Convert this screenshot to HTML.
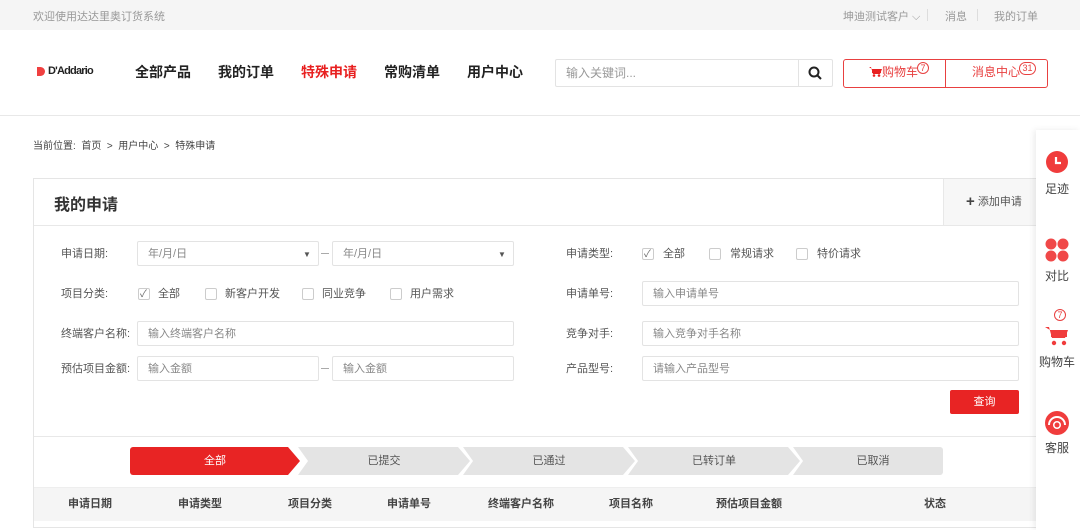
<!DOCTYPE html>
<html><head><meta charset="utf-8"><style>
*{margin:0;padding:0;box-sizing:border-box}
body{width:1080px;height:521px;overflow:hidden;background:#fff;font-family:"Liberation Sans","Noto Sans CJK SC",sans-serif;position:relative;color:#333}
.a{position:absolute;white-space:nowrap}
.top{left:0;top:0;width:1080px;height:30px;background:#f5f5f5;font-size:11px;color:#999}
.nav{font-size:14px;font-weight:bold;color:#222;top:62px}
.lbl{font-size:11px;color:#555}
.inp{border:1px solid #e3e3e3;border-radius:2px;height:25px;font-size:11px;color:#888;padding-left:10px;line-height:25px;background:#fff}
.cb{width:12px;height:12px;border:1px solid #ccc;border-radius:2px;background:#fff}
.ct{font-size:11px;color:#555}
.step{top:447px;height:28px;background:#e4e4e4;font-size:11px;color:#555;text-align:center;line-height:28px}
.th{top:495px;font-size:11px;font-weight:bold;color:#444}
</style></head><body>
<div class="a top"><span class="a" style="left:33px;top:8px">欢迎使用达达里奥订货系统</span>
<span class="a" style="left:843px;top:8px">坤迪测试客户 ⌵</span>
<span class="a" style="left:927px;top:9px;width:1px;height:12px;background:#ddd"></span>
<span class="a" style="left:945px;top:8px">消息</span>
<span class="a" style="left:977px;top:9px;width:1px;height:12px;background:#ddd"></span>
<span class="a" style="left:994px;top:8px">我的订单</span></div>
<div class="a" style="left:0;top:115px;width:1080px;height:1px;background:#e8e8e8"></div>
<div class="a" style="left:37px;top:67px;width:8px;height:9px;background:#f04040;border-radius:0 5px 5px 0"></div>
<div class="a" style="left:48px;top:65px;font-size:11px;font-weight:bold;letter-spacing:-0.8px;color:#222">D'Addario</div>
<div class="a nav" style="left:135px">全部产品</div>
<div class="a nav" style="left:218px">我的订单</div>
<div class="a nav" style="left:301px;color:#e82020">特殊申请</div>
<div class="a nav" style="left:384px">常购清单</div>
<div class="a nav" style="left:467px">用户中心</div>
<div class="a" style="left:555px;top:59px;width:278px;height:28px;border:1px solid #e3e3e3;border-radius:2px"></div>
<div class="a" style="left:566px;top:64px;font-size:12px;color:#999">输入关键词...</div>
<div class="a" style="left:798px;top:60px;width:1px;height:26px;background:#e3e3e3"></div>
<svg class="a" style="left:808px;top:66px" width="14" height="14"><circle cx="6" cy="6" r="4.5" fill="none" stroke="#222" stroke-width="2"/><path d="M9 9l4 4" stroke="#222" stroke-width="2"/></svg>
<div class="a" style="left:843px;top:59px;width:205px;height:29px;border:1px solid #e84040;border-radius:3px"></div>
<div class="a" style="left:945px;top:59px;width:1px;height:29px;background:#e84040"></div>
<svg class="a" style="left:869px;top:66px" width="13" height="11"><path d="M0 1h2l2 7h7l2-5H3" fill="#e82020"/><rect x="3" y="3" width="9" height="4" fill="#e82020"/><circle cx="5" cy="9.5" r="1.3" fill="#e82020"/><circle cx="10" cy="9.5" r="1.3" fill="#e82020"/></svg>
<div class="a" style="left:882px;top:63px;font-size:12px;color:#e84040">购物车</div>
<div class="a" style="left:917px;top:62px;width:12px;height:12px;border:1px solid #e84040;border-radius:50%;font-size:9px;color:#e84040;text-align:center;line-height:10px">7</div>
<div class="a" style="left:972px;top:63px;font-size:12px;color:#e84040">消息中心</div>
<div class="a" style="left:1019px;top:62px;width:17px;height:13px;border:1px solid #e84040;border-radius:7px;font-size:9px;color:#e84040;text-align:center;line-height:11px">31</div>
<div class="a" style="left:33px;top:137px;font-size:10px;color:#444">当前位置:&nbsp; 首页 &nbsp;&gt;&nbsp; 用户中心 &nbsp;&gt;&nbsp; 特殊申请</div>
<div class="a" style="left:33px;top:178px;width:1014px;height:350px;border:1px solid #e5e5e5"></div>
<div class="a" style="left:34px;top:225px;width:1012px;height:1px;background:#e8e8e8"></div>
<div class="a" style="left:943px;top:179px;width:103px;height:46px;background:#f7f7f7;border-left:1px solid #e8e8e8"></div>
<div class="a" style="left:966px;top:193px;font-size:11px;color:#555"><b style="font-size:15px;color:#444;vertical-align:-1px">+</b> 添加申请</div>
<div class="a" style="left:54px;top:191px;font-size:16px;font-weight:bold;color:#333">我的申请</div>
<div class="a lbl" style="left:61px;top:245px">申请日期:</div>
<div class="a inp" style="left:137px;top:241px;width:182px">年/月/日<span class="a" style="left:165px;top:0;font-size:8px;color:#555">▼</span></div>
<div class="a" style="left:321px;top:253px;width:8px;height:1px;background:#aaa"></div>
<div class="a inp" style="left:332px;top:241px;width:182px">年/月/日<span class="a" style="left:165px;top:0;font-size:8px;color:#555">▼</span></div>
<div class="a lbl" style="left:61px;top:285px">项目分类:</div>
<div class="a cb" style="left:138px;top:288px"></div><div class="a" style="left:140px;top:285px;font-size:10px;color:#666">✓</div><div class="a ct" style="left:158px;top:285px">全部</div>
<div class="a cb" style="left:205px;top:288px"></div><div class="a ct" style="left:225px;top:285px">新客户开发</div>
<div class="a cb" style="left:302px;top:288px"></div><div class="a ct" style="left:322px;top:285px">同业竞争</div>
<div class="a cb" style="left:390px;top:288px"></div><div class="a ct" style="left:410px;top:285px">用户需求</div>
<div class="a lbl" style="left:61px;top:325px">终端客户名称:</div>
<div class="a inp" style="left:137px;top:321px;width:377px">输入终端客户名称</div>
<div class="a lbl" style="left:61px;top:360px">预估项目金额:</div>
<div class="a inp" style="left:137px;top:356px;width:182px">输入金额</div>
<div class="a" style="left:321px;top:368px;width:8px;height:1px;background:#aaa"></div>
<div class="a inp" style="left:332px;top:356px;width:182px">输入金额</div>
<div class="a lbl" style="left:566px;top:245px">申请类型:</div>
<div class="a cb" style="left:642px;top:248px"></div><div class="a" style="left:644px;top:245px;font-size:10px;color:#666">✓</div><div class="a ct" style="left:663px;top:245px">全部</div>
<div class="a cb" style="left:709px;top:248px"></div><div class="a ct" style="left:730px;top:245px">常规请求</div>
<div class="a cb" style="left:796px;top:248px"></div><div class="a ct" style="left:817px;top:245px">特价请求</div>
<div class="a lbl" style="left:566px;top:285px">申请单号:</div>
<div class="a inp" style="left:642px;top:281px;width:377px">输入申请单号</div>
<div class="a lbl" style="left:566px;top:325px">竞争对手:</div>
<div class="a inp" style="left:642px;top:321px;width:377px">输入竞争对手名称</div>
<div class="a lbl" style="left:566px;top:360px">产品型号:</div>
<div class="a inp" style="left:642px;top:356px;width:377px">请输入产品型号</div>
<div class="a" style="left:950px;top:390px;width:69px;height:24px;background:#e82424;border-radius:2px;color:#fff;font-size:11px;text-align:center;line-height:24px">查询</div>
<div class="a" style="left:34px;top:436px;width:1012px;height:1px;background:#e8e8e8"></div>
<div class="a step" style="left:793px;width:150px;border-radius:0 3px 3px 0;clip-path:polygon(0 0,100% 0,100% 100%,0 100%,10px 50%);padding-left:10px">已取消</div>
<div class="a step" style="left:628px;width:172px;clip-path:polygon(0 0,160px 0,172px 50%,160px 100%,0 100%,10px 50%)">已转订单</div>
<div class="a step" style="left:463px;width:172px;clip-path:polygon(0 0,160px 0,172px 50%,160px 100%,0 100%,10px 50%)">已通过</div>
<div class="a step" style="left:298px;width:172px;clip-path:polygon(0 0,160px 0,172px 50%,160px 100%,0 100%,10px 50%)">已提交</div>
<div class="a step" style="left:130px;width:170px;background:#e82424;color:#fff;border-radius:3px 0 0 3px;clip-path:polygon(0 0,158px 0,170px 50%,158px 100%,0 100%);padding-right:0">全部</div>
<div class="a" style="left:34px;top:487px;width:1012px;height:34px;background:#f5f5f5;border-top:1px solid #eee"></div>
<div class="a th" style="left:68px">申请日期</div>
<div class="a th" style="left:178px">申请类型</div>
<div class="a th" style="left:288px">项目分类</div>
<div class="a th" style="left:387px">申请单号</div>
<div class="a th" style="left:488px">终端客户名称</div>
<div class="a th" style="left:609px">项目名称</div>
<div class="a th" style="left:716px">预估项目金额</div>
<div class="a th" style="left:924px">状态</div>
<div class="a" style="left:1036px;top:130px;width:44px;height:400px;background:#fff;box-shadow:-2px 0 6px rgba(0,0,0,0.08)"></div>
<svg class="a" style="left:1046px;top:151px" width="22" height="22"><circle cx="11" cy="11" r="11" fill="#f03c3c"/><path d="M10 6v6h5" stroke="#fff" stroke-width="2.2" fill="none"/></svg>
<div class="a" style="left:1045px;top:180px;font-size:12px;color:#444">足迹</div>
<svg class="a" style="left:1045px;top:238px" width="24" height="24"><circle cx="6" cy="6" r="5.5" fill="#f04848"/><circle cx="18" cy="6" r="5.5" fill="#f04848"/><circle cx="6" cy="18" r="5.5" fill="#f04848"/><circle cx="18" cy="18" r="5.5" fill="#f04848"/></svg>
<div class="a" style="left:1045px;top:267px;font-size:12px;color:#444">对比</div>
<div class="a" style="left:1054px;top:309px;width:12px;height:12px;border:1px solid #e84040;border-radius:50%;font-size:9px;color:#e84040;text-align:center;line-height:10px">7</div>
<svg class="a" style="left:1045px;top:325px" width="24" height="22"><path d="M0 2h4l3 11h13l3-8H5" fill="#f03c3c"/><rect x="6" y="5" width="16" height="7" fill="#f03c3c"/><circle cx="9" cy="18" r="2.2" fill="#f03c3c"/><circle cx="19" cy="18" r="2.2" fill="#f03c3c"/></svg>
<div class="a" style="left:1039px;top:353px;font-size:12px;color:#444">购物车</div>
<svg class="a" style="left:1045px;top:411px" width="24" height="24"><circle cx="12" cy="12" r="12" fill="#f03c3c"/><path d="M4 14a8 8 0 0 1 16 0" stroke="#fff" stroke-width="2" fill="none"/><circle cx="12" cy="14" r="4" fill="#fff"/><circle cx="12" cy="14" r="2.5" fill="#f03c3c"/></svg>
<div class="a" style="left:1045px;top:439px;font-size:12px;color:#444">客服</div>
</body></html>
